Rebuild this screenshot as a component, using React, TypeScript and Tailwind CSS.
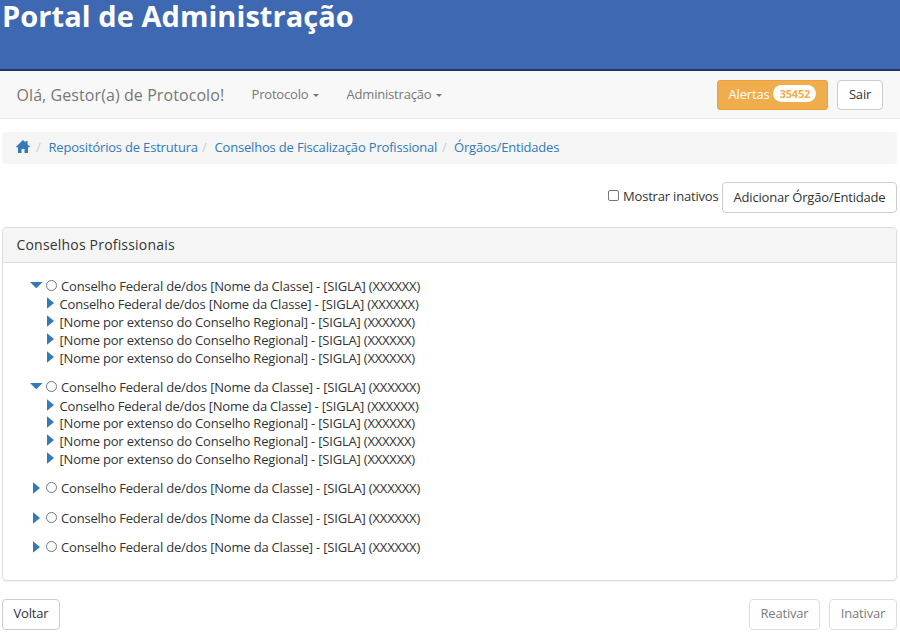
import React from "react";

const FEDERAL = "Conselho Federal de/dos [Nome da Classe] - [SIGLA] (XXXXXX)";
const REGIONAL = "[Nome por extenso do Conselho Regional] - [SIGLA] (XXXXXX)";

type Node = { open?: boolean; gap: string; children?: { label: string; gap: string }[] };

const NODES: Node[] = [
  {
    open: true,
    gap: "mt-0",
    children: [
      { label: FEDERAL, gap: "mt-0" },
      { label: REGIONAL, gap: "mt-0" },
      { label: REGIONAL, gap: "mt-0" },
      { label: REGIONAL, gap: "mt-0" },
    ],
  },
  {
    open: true,
    gap: "mt-[11px]",
    children: [
      { label: FEDERAL, gap: "mt-px" },
      { label: REGIONAL, gap: "-mt-px" },
      { label: REGIONAL, gap: "mt-0" },
      { label: REGIONAL, gap: "mt-0" },
    ],
  },
  { gap: "mt-[11px]" },
  { gap: "mt-3" },
  { gap: "mt-[11px]" },
];

function Right() {
  return (
    <svg className="block h-[12px] w-[7px] shrink-0" viewBox="0 0 7 12" fill="#337ab7">
      <path d="M0 0.3L7 6L0 11.7Z" />
    </svg>
  );
}

function Down() {
  return (
    <svg className="block h-[6px] w-[13px] shrink-0" viewBox="0 0 13 6" fill="#337ab7">
      <path d="M0 0H12.6L6.3 6.3Z" />
    </svg>
  );
}

function Caret() {
  return (
    <svg className="ml-[5px] mt-[3px] block h-[3px] w-[6px]" viewBox="0 0 6 3" fill="#777">
      <path d="M0 0H6L3 3Z" />
    </svg>
  );
}

function Home() {
  return (
    <svg className="block h-[13px] w-[14px]" viewBox="0 0 14 13" fill="#337ab7">
      <path d="M7 0L9.6 2.5V1H11.6V4.4L14 6.8V7.3H12V13H8.5V9H5.5V13H2V7.3H0V6.8Z" />
    </svg>
  );
}

const BTN =
  "flex items-center justify-center rounded-[4px] border border-[#ccc] bg-white text-[13px] leading-[18px] whitespace-nowrap text-[#333]";

function Slash() {
  return <span className="w-[4px] text-[#ccc]">/</span>;
}

export default function App() {
  return (
    <div className="flex h-[632px] w-[900px] flex-col bg-white font-['Open_Sans',sans-serif] text-[13px] leading-[18px] tracking-[-0.19px] text-[#333]">
      <header className="h-[71px] shrink-0 border-b-2 border-[#1c3768] bg-[#3e68b2] pl-[2px]">
        <h1 className="w-max text-[29px] leading-[32px] font-bold tracking-[0.06px] text-white">Portal de Administração</h1>
      </header>

      <nav className="flex h-[48px] shrink-0 items-center border-b border-[#e7e7e7] bg-[#f8f8f8] pr-[17px] pl-[16.5px] text-[#777]">
        <span className="w-[235px] text-[16px] tracking-[0.08px] whitespace-nowrap">Olá, Gestor(a) de Protocolo!</span>
        <span className="flex w-[95px] items-center pb-[2px] whitespace-nowrap">Protocolo<Caret /></span>
        <span className="flex items-center pb-[2px] whitespace-nowrap">Administração<Caret /></span>
        <button className="ml-auto flex h-[30px] w-[111px] items-center justify-center gap-[4px] rounded-[3px] border border-[#eea236] bg-[#f0ad4e] pb-[2px] text-white">
          <span>Alertas</span>
          <span className="flex h-[17px] w-[43px] items-center justify-center rounded-full bg-white text-[11px] font-bold text-[#f0ad4e]">35452</span>
        </button>
        <button className={`${BTN} ml-[9px] h-[30px] w-[46px] pb-[2px]`}>Sair</button>
      </nav>

      <div className="mt-[13px] mr-[3px] ml-[2px] flex h-[32px] shrink-0 items-center rounded-[4px] bg-[#f5f5f5] pb-[2px] pl-[14px] whitespace-nowrap text-[#337ab7]">
        <span className="mb-px w-[20px]"><Home /></span>
        <Slash />
        <a className="ml-[8.5px] w-[153.5px]">Repositórios de Estrutura</a>
        <Slash />
        <a className="ml-[8.5px] w-[227.5px] tracking-[-0.18px]">Conselhos de Fiscalização Profissional</a>
        <Slash />
        <a className="ml-[8px]">Órgãos/Entidades</a>
      </div>

      <div className="mt-[18px] mr-[3px] flex h-[31px] shrink-0 items-center justify-end">
        <span className="mr-[4px] mb-[4px] h-[11px] w-[11px] rounded-[2px] border border-[#767676] bg-white" />
        <span className="mb-[4px] w-[99px] whitespace-nowrap">Mostrar inativos</span>
        <button className={`${BTN} h-[31px] w-[175px] pb-[2px]`}>Adicionar Órgão/Entidade</button>
      </div>

      <section className="mt-[14px] mr-[3px] ml-[2px] h-[354px] shrink-0 rounded-[4px] border border-[#ddd] shadow-[0_1px_1px_rgba(0,0,0,0.05)]">
        <h2 className="flex h-[35px] items-center rounded-t-[3px] border-b border-[#ddd] bg-[#f5f5f5] pl-[13.5px] text-[14px] tracking-[0.19px]">Conselhos Profissionais</h2>
        <div className="pt-[14px] pl-[28px]">
          {NODES.map((n, i) => (
            <div key={i} className={n.gap}>
              <div className="flex h-[18px] items-center">
                <span className={n.open ? "mb-[2px] -ml-px w-[16px]" : "ml-[2px] w-[13px]"}>{n.open ? <Down /> : <Right />}</span>
                <span className="mr-[4px] mb-px h-[11px] w-[11px] rounded-full border border-[#767676] bg-white" />
                <span className="whitespace-nowrap">{FEDERAL}</span>
              </div>
              {n.children?.map((c, j) => (
                <div key={j} className={`flex h-[18px] items-center pl-[15.5px] ${c.gap}`}>
                  <span className="mb-[2px] w-[13px]"><Right /></span>
                  <span className="whitespace-nowrap">{c.label}</span>
                </div>
              ))}
            </div>
          ))}
        </div>
      </section>

      <footer className="mt-[18px] mr-[3px] ml-[2px] flex h-[31px] shrink-0">
        <button className={`${BTN} w-[58px] pb-[3px]`}>Voltar</button>
        <button className={`${BTN} ml-auto w-[71px] pb-[3px] opacity-65`}>Reativar</button>
        <button className={`${BTN} ml-[9px] w-[68px] pb-[3px] opacity-65`}>Inativar</button>
      </footer>
    </div>
  );
}
